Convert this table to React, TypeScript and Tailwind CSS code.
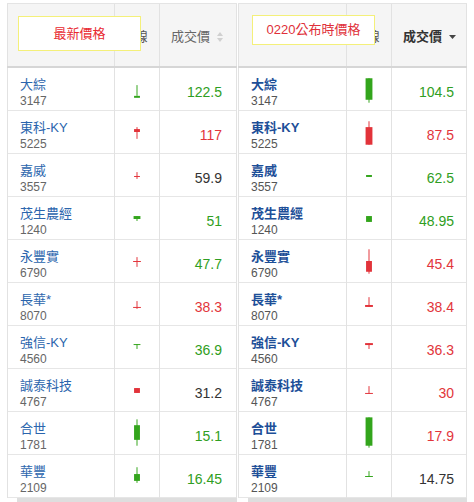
type Candle = { c: 'g' | 'r'; w: [number, number]; b: [number, number]; bw: number }
type Row = { name: string; code: string; price: string; pc: 'g' | 'r' | 'k'; k: Candle }

const leftRows: Row[] = [
  { name: '大綜', code: '3147', price: '122.5', pc: 'g', k: { c: 'g', w: [17, 28], b: [28, 30], bw: 6 } },
  { name: '東科-KY', code: '5225', price: '117', pc: 'r', k: { c: 'r', w: [16, 28], b: [18, 21], bw: 6 } },
  { name: '嘉威', code: '3557', price: '59.9', pc: 'k', k: { c: 'r', w: [18, 25], b: [22, 23], bw: 6 } },
  { name: '茂生農經', code: '1240', price: '51', pc: 'g', k: { c: 'g', w: [19, 24], b: [19, 22], bw: 7 } },
  { name: '永豐實', code: '6790', price: '47.7', pc: 'g', k: { c: 'r', w: [17, 27], b: [21, 22], bw: 8 } },
  { name: '長華*', code: '8070', price: '38.3', pc: 'r', k: { c: 'r', w: [18, 26], b: [24, 25], bw: 8 } },
  { name: '強信-KY', code: '4560', price: '36.9', pc: 'g', k: { c: 'g', w: [18, 23], b: [18, 19], bw: 7 } },
  { name: '誠泰科技', code: '4767', price: '31.2', pc: 'k', k: { c: 'r', w: [19, 24], b: [19, 24], bw: 6 } },
  { name: '合世', code: '1781', price: '15.1', pc: 'g', k: { c: 'g', w: [7, 34], b: [13, 28], bw: 6 } },
  { name: '華豐', code: '2109', price: '16.45', pc: 'g', k: { c: 'g', w: [12, 28], b: [19, 26], bw: 6 } },
]

const rightRows: Row[] = [
  { name: '大綜', code: '3147', price: '104.5', pc: 'g', k: { c: 'g', w: [10, 35], b: [10, 32], bw: 7 } },
  { name: '東科-KY', code: '5225', price: '87.5', pc: 'r', k: { c: 'r', w: [10, 34], b: [16, 34], bw: 7 } },
  { name: '嘉威', code: '3557', price: '62.5', pc: 'g', k: { c: 'g', w: [21, 23], b: [21, 23], bw: 6 } },
  { name: '茂生農經', code: '1240', price: '48.95', pc: 'g', k: { c: 'g', w: [19, 25], b: [19, 25], bw: 6 } },
  { name: '永豐實', code: '6790', price: '45.4', pc: 'r', k: { c: 'r', w: [9, 34], b: [21, 32], bw: 6 } },
  { name: '長華*', code: '8070', price: '38.4', pc: 'r', k: { c: 'r', w: [14, 24], b: [22, 24], bw: 8 } },
  { name: '強信-KY', code: '4560', price: '36.3', pc: 'r', k: { c: 'r', w: [17, 23], b: [17, 19], bw: 8 } },
  { name: '誠泰科技', code: '4767', price: '30', pc: 'r', k: { c: 'r', w: [17, 25], b: [24, 25], bw: 8 } },
  { name: '合世', code: '1781', price: '17.9', pc: 'r', k: { c: 'g', w: [5, 36], b: [5, 34], bw: 7 } },
  { name: '華豐', code: '2109', price: '14.75', pc: 'k', k: { c: 'g', w: [16, 22], b: [21, 22], bw: 8 } },
]

const priceColor = { g: 'text-[#2f9e22]', r: 'text-[#e2353b]', k: 'text-[#333333]' }

function CandleIcon({ k }: { k: Candle }) {
  const fill = k.c === 'g' ? '#33a51c' : '#e2333a'
  return (
    <svg width="45" height="43" viewBox="0 0 45 43">
      <rect x="22" y={k.w[0]} width="1" height={k.w[1] - k.w[0]} fill={fill} />
      <rect x={22.5 - k.bw / 2} y={k.b[0]} width={k.bw} height={Math.max(1, k.b[1] - k.b[0])} fill={fill} />
    </svg>
  )
}

function Table({ rows, right }: { rows: Row[]; right?: boolean }) {
  const cols = right ? 'grid-cols-[108px_45px_76px]' : 'grid-cols-[107px_45px_78px]'
  return (
    <div className={right ? 'relative w-[229px] ml-[1px]' : 'relative w-[230px] ml-[7px]'}>
      <div className={`grid ${cols} h-[65px] mt-[3px] bg-[#f5f5f5] border-t border-[#e4e4e4] border-b-2 border-b-[#d6d6d6]`}>
        <div className="border-l border-[#e2e2e2]" />
        <div className="border-l border-[#e2e2e2] flex items-center justify-center pt-[3px] text-[13px] text-[#555]">
          K線
        </div>
        <div className="border-l border-r border-[#e2e2e2] flex items-center pl-[11px] pt-[3px] gap-[7px]">
          {right ? (
            <>
              <span className="text-[13px] font-bold text-[#333]">成交價</span>
              <svg width="7" height="4" viewBox="0 0 7 4">
                <path d="M0 0h7L3.5 4z" fill="#444" />
              </svg>
            </>
          ) : (
            <>
              <span className="text-[13px] text-[#666]">成交價</span>
              <svg width="6" height="10" viewBox="0 0 6 10">
                <path d="M0 4L3 0L6 4z M0 6L3 10L6 6z" fill="#d0d0d0" />
              </svg>
            </>
          )}
        </div>
      </div>

      {rows.map((r) => (
        <div key={r.code} className={`grid ${cols} h-[43px] border-b border-[#e6e6e6] bg-white`}>
          <div className="border-l border-[#e2e2e2] pl-[12px] pt-[8px] flex flex-col">
            <span className={`text-[13px] leading-[17px] ${right ? 'font-bold text-[#1d4f98]' : 'text-[#2b65ad]'}`}>
              {r.name}
            </span>
            <span className={`text-[12px] leading-[17px] ${right ? 'text-[#555]' : 'text-[#666]'}`}>{r.code}</span>
          </div>
          <div className="border-l border-[#e2e2e2] flex">
            <CandleIcon k={r.k} />
          </div>
          <div
            className={`border-l border-r border-[#e2e2e2] flex items-center justify-end pt-[5px] text-[14px] ${
              right ? 'pr-[12px]' : 'pr-[14px]'
            } ${priceColor[r.pc]}`}
          >
            {r.price}
          </div>
        </div>
      ))}
      <div className="h-[4px] ml-[10px] bg-[#dedede]" />

      {right ? (
        <div className="absolute left-[14px] top-[15px] w-[123px] h-[30px] bg-white border border-[#f4f07a] flex items-center justify-center text-[13px] text-[#e0303a]">
          0220公布時價格
        </div>
      ) : (
        <div className="absolute left-[11px] top-[16px] w-[123px] h-[35px] bg-white border border-[#f4f07a] flex justify-center pt-[7px] text-[13px] text-[#e8282f]">
          最新價格
        </div>
      )}
    </div>
  )
}

export default function App() {
  return (
    <div className="w-[474px] h-[502px] overflow-hidden bg-white font-['Liberation_Sans','Noto_Sans_CJK_TC',sans-serif]">
      <div className="flex">
        <Table rows={leftRows} />
        <Table rows={rightRows} right />
      </div>
    </div>
  )
}
